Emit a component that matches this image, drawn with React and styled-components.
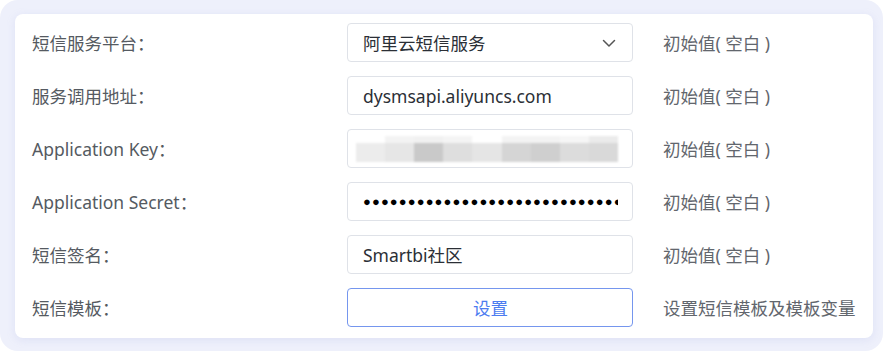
import React from "react";
import styled, { createGlobalStyle } from "styled-components";

const Global = createGlobalStyle`
  html, body { margin: 0; padding: 0; background: #ffffff; }
  body { font-family: "Noto Sans", "Noto Sans CJK SC", sans-serif; }
`;

const Frame = styled.div`
  width: 883px;
  height: 351px;
  box-sizing: border-box;
  background: #eef0fb;
  border-radius: 18px;
  padding: 14px 10px 0 15px;
`;

const Card = styled.div`
  width: 858px;
  height: 324px;
  box-sizing: border-box;
  background: #ffffff;
  border-radius: 8px;
  box-shadow: 0 2px 8px rgba(150, 160, 220, 0.18);
  padding: 9px 0 0 17px;
  display: flex;
  flex-direction: column;
  gap: 14px;
`;

const Row = styled.div`
  display: grid;
  grid-template-columns: 285px 286px auto;
  column-gap: 30px;
  align-items: center;
  height: 39px;
`;

const Label = styled.div`
  font-size: 17.5px;
  color: #555a61;
  white-space: nowrap;
`;

const Field = styled.div`
  height: 39px;
  box-sizing: border-box;
  border: 1px solid ${(p) => (p.$primary ? "#7596ee" : "#dfe2e8")};
  border-radius: 4px;
  display: flex;
  align-items: center;
  justify-content: ${(p) => (p.$primary ? "center" : "space-between")};
  padding: 0 14px 0 15px;
  font-size: 17.5px;
  color: ${(p) => (p.$primary ? "#4d7cf0" : "#2b2f36")};
  overflow: hidden;
  white-space: nowrap;
  background: #fff;
`;

const Hint = styled.div`
  font-size: 17.5px;
  color: #62666d;
  white-space: nowrap;
`;

const Chevron = styled.svg`
  width: 18px;
  height: 18px;
  flex: none;
`;

const Blur = styled.div`
  display: grid;
  grid-template-columns: repeat(9, 1fr);
  grid-template-rows: 7px 19px;
  width: 267px;
  height: 26px;
  margin-left: -7px;
  filter: blur(1.2px);
`;

const Cell = styled.span`
  background: ${(p) => p.$c};
`;

const Dots = styled.div`
  width: 256px;
  overflow: hidden;
  font-family: "Liberation Sans", sans-serif;
  font-size: 13px;
  letter-spacing: 1.1px;
  color: #000;
  line-height: 1;
`;

const top = ["#ffffff", "#f3f3f3", "#f1f1f1", "#f4f4f4", "#ffffff", "#f3f3f3", "#f3f3f3", "#f6f6f6", "#ebebeb"];
const bottom = ["#ececec", "#e6e6e6", "#c9c9c9", "#dedede", "#e5e5e5", "#d5d5d5", "#cfcfcf", "#dcdcdc", "#d9d9d9"];

export default function App() {
  return (
    <>
      <Global />
      <Frame>
        <Card>
          <Row>
            <Label>短信服务平台：</Label>
            <Field>
              <span>阿里云短信服务</span>
              <Chevron viewBox="0 0 18 18" fill="none">
                <path d="M3.5 6.5 L9 12 L14.5 6.5" stroke="#555" strokeWidth="1.5" strokeLinecap="round" strokeLinejoin="round" />
              </Chevron>
            </Field>
            <Hint>初始值( 空白 )</Hint>
          </Row>
          <Row>
            <Label>服务调用地址：</Label>
            <Field><span>dysmsapi.aliyuncs.com</span></Field>
            <Hint>初始值( 空白 )</Hint>
          </Row>
          <Row>
            <Label>Application Key：</Label>
            <Field>
              <Blur>
                {top.map((c, i) => <Cell key={"t" + i} $c={c} />)}
                {bottom.map((c, i) => <Cell key={"b" + i} $c={c} />)}
              </Blur>
            </Field>
            <Hint>初始值( 空白 )</Hint>
          </Row>
          <Row>
            <Label>Application Secret：</Label>
            <Field>
              <Dots>{"●".repeat(30)}</Dots>
            </Field>
            <Hint>初始值( 空白 )</Hint>
          </Row>
          <Row>
            <Label>短信签名：</Label>
            <Field><span>Smartbi社区</span></Field>
            <Hint>初始值( 空白 )</Hint>
          </Row>
          <Row>
            <Label>短信模板：</Label>
            <Field $primary>设置</Field>
            <Hint>设置短信模板及模板变量</Hint>
          </Row>
        </Card>
      </Frame>
    </>
  );
}
